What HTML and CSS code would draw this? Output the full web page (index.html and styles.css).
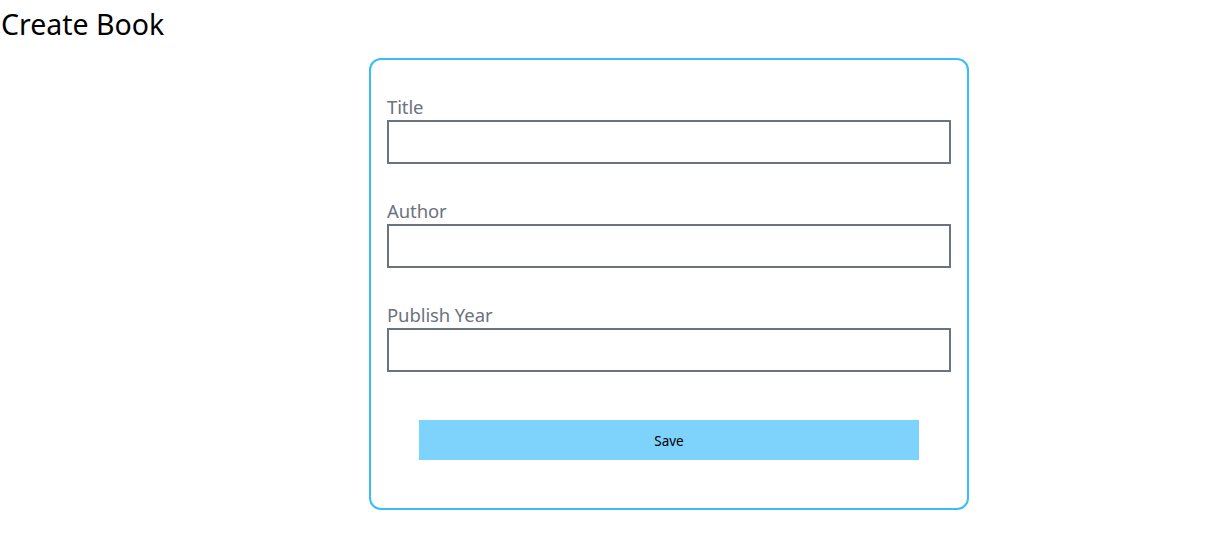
FILE: index.html
```html
<!DOCTYPE html>
<html lang="en">
<head>
<meta charset="utf-8">
<title>Create Book</title>
<link rel="stylesheet" href="styles.css">
</head>
<body>
  <div class="page">
    <h1 class="page-title">Create Book</h1>
    <form class="card">
      <div class="field">
        <label class="field-label">Title</label>
        <input class="field-input" type="text">
      </div>
      <div class="field">
        <label class="field-label">Author</label>
        <input class="field-input" type="text">
      </div>
      <div class="field">
        <label class="field-label">Publish Year</label>
        <input class="field-input" type="text">
      </div>
      <button class="save-btn" type="button">Save</button>
    </form>
  </div>
</body>
</html>
```

FILE: styles.css
```css
* { box-sizing: border-box; }
html, body {
  margin: 0;
  padding: 0;
  background: #ffffff;
  font-family: "Noto Sans", "Open Sans", sans-serif;
}
.page {
  display: flex;
  flex-direction: column;
  align-items: flex-start;
}
.page-title {
  margin: 6px 0 0 1px;
  font-size: 28.5px;
  line-height: 36px;
  font-weight: 400;
  color: #000;
  letter-spacing: 0;
}
.card {
  margin: 16px 0 0 369px;
  width: 600px;
  border: 2px solid #38bdf8;
  border-radius: 12px;
  padding: 16px;
  display: flex;
  flex-direction: column;
}
.field {
  margin: 16px 0;
  display: flex;
  flex-direction: column;
}
.field-label {
  font-size: 18.5px;
  line-height: 28px;
  color: #6b7280;
  margin-right: 16px;
  letter-spacing: -0.1px;
  padding-top: 1px;
  margin-bottom: -1px;
}
.field-input {
  border: 2px solid #6b7280;
  padding: 8px 16px;
  height: 44px;
  width: 100%;
  font-size: 16px;
  font-family: inherit;
  outline: none;
}
.save-btn {
  margin: 32px;
  padding: 9px 8px 7px;
  background: #7dd3fc;
  border: none;
  font-family: inherit;
  font-size: 13.5px;
  line-height: 24px;
  color: #000;
  cursor: pointer;
}
```
